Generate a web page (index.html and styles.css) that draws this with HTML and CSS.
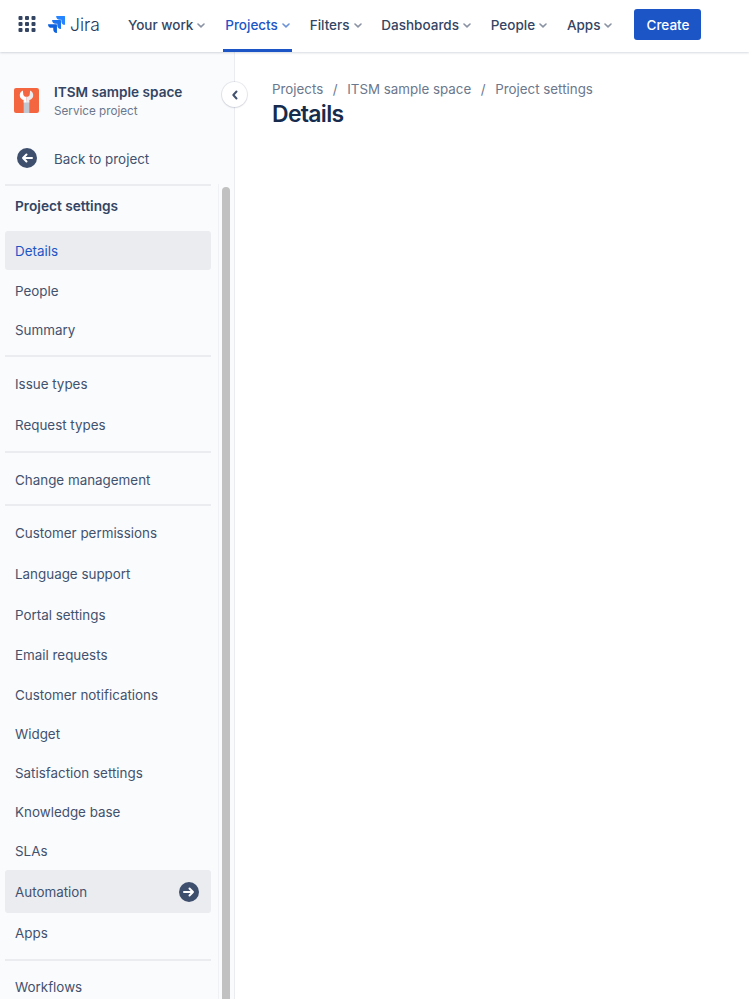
FILE: index.html
```html
<!DOCTYPE html>
<html lang="en">
<head>
<meta charset="utf-8">
<title>Details - ITSM sample space</title>
<link rel="stylesheet" href="styles.css">
</head>
<body>
<header class="topbar">
  <svg class="apps" width="18" height="18" viewBox="0 0 18 18" fill="#344563" aria-hidden="true">
    <rect x="0.5" y="1" width="4" height="4" rx="1"/><rect x="7" y="1" width="4" height="4" rx="1"/><rect x="13.5" y="1" width="4" height="4" rx="1"/>
    <rect x="0.5" y="7" width="4" height="4" rx="1"/><rect x="7" y="7" width="4" height="4" rx="1"/><rect x="13.5" y="7" width="4" height="4" rx="1"/>
    <rect x="0.5" y="13" width="4" height="4" rx="1"/><rect x="7" y="13" width="4" height="4" rx="1"/><rect x="13.5" y="13" width="4" height="4" rx="1"/>
  </svg>
  <div class="logo">
    <svg width="19" height="19" viewBox="0 0 24 24" aria-hidden="true">
      <path fill="#0f62de" d="M11.571 11.513H0a5.218 5.218 0 0 0 5.232 5.215h2.130v2.057A5.215 5.215 0 0 0 12.575 24V12.518a1.005 1.005 0 0 0-1.005-1.005z"/>
      <path fill="#1c74ee" d="M17.294 5.757H5.736a5.215 5.215 0 0 0 5.215 5.214h2.129v2.058a5.218 5.218 0 0 0 5.215 5.214V6.758a1.001 1.001 0 0 0-1.001-1.001z"/>
      <path fill="#2684ff" d="M23.013 0H11.455a5.215 5.215 0 0 0 5.215 5.215h2.129v2.057A5.215 5.215 0 0 0 24 12.483V1.005A1.001 1.001 0 0 0 23.013 0z"/>
    </svg>
    <span class="logo-text">Jira</span>
  </div>
  <nav class="nav">
    <a class="nav-item">Your work<svg class="chev" width="8" height="5" viewBox="0 0 8 5"><path d="M1 1l3 2.800L7 1" fill="none" stroke="currentColor" stroke-width="1.600" stroke-linecap="round" stroke-linejoin="round"/></svg></a>
    <a class="nav-item active">Projects<svg class="chev" width="8" height="5" viewBox="0 0 8 5"><path d="M1 1l3 2.800L7 1" fill="none" stroke="currentColor" stroke-width="1.600" stroke-linecap="round" stroke-linejoin="round"/></svg></a>
    <a class="nav-item">Filters<svg class="chev" width="8" height="5" viewBox="0 0 8 5"><path d="M1 1l3 2.800L7 1" fill="none" stroke="currentColor" stroke-width="1.600" stroke-linecap="round" stroke-linejoin="round"/></svg></a>
    <a class="nav-item">Dashboards<svg class="chev" width="8" height="5" viewBox="0 0 8 5"><path d="M1 1l3 2.800L7 1" fill="none" stroke="currentColor" stroke-width="1.600" stroke-linecap="round" stroke-linejoin="round"/></svg></a>
    <a class="nav-item">People<svg class="chev" width="8" height="5" viewBox="0 0 8 5"><path d="M1 1l3 2.800L7 1" fill="none" stroke="currentColor" stroke-width="1.600" stroke-linecap="round" stroke-linejoin="round"/></svg></a>
    <a class="nav-item">Apps<svg class="chev" width="8" height="5" viewBox="0 0 8 5"><path d="M1 1l3 2.800L7 1" fill="none" stroke="currentColor" stroke-width="1.600" stroke-linecap="round" stroke-linejoin="round"/></svg></a>
  </nav>
  <button class="create">Create</button>
</header>
<div class="layout">
  <aside class="sidebar">
    <div class="project">
      <svg class="project-icon" width="25" height="25" viewBox="0 0 24 24" aria-hidden="true">
        <rect width="24" height="24" rx="2" fill="#f4663f"/>
        <rect x="9.300" y="12" width="5.400" height="12" fill="#c1c7d0"/>
        <path fill="#fff" d="M8.500 2.500C6.300 3.500 5.200 5.700 5.600 7.800c.3 1.800 1.500 3 3.700 3.700V14H12V8.500c-1.300 0-2.400-.6-3-1.800z"/>
        <path fill="#ebecf0" d="M15.500 2.500c2.200 1 3.300 3.200 2.900 5.300-.3 1.800-1.500 3-3.700 3.700V14H12V8.500c1.300 0 2.400-.6 3-1.800z"/>
      </svg>
      <div class="project-text">
        <div class="project-name">ITSM sample space</div>
        <div class="project-type">Service project</div>
      </div>
    </div>
    <div class="back">
      <svg class="round-icon" width="20" height="20" viewBox="0 0 20 20" aria-hidden="true">
        <circle cx="10" cy="10" r="10" fill="#3e4f6e"/>
        <path d="M15 10H6M9.500 6.500L6 10l3.500 3.500" fill="none" stroke="#fff" stroke-width="2" stroke-linecap="round" stroke-linejoin="round"/>
      </svg>
      <span>Back to project</span>
    </div>
    <div class="scroller">
      <div class="list">
        <div class="heading">Project settings</div>
        <a class="row selected">Details</a>
        <a class="row">People</a>
        <a class="row">Summary</a>
        <hr class="divider wide">
        <a class="row tall">Issue types</a>
        <a class="row tall">Request types</a>
        <hr class="divider">
        <a class="row change">Change management</a>
        <hr class="divider wide">
        <a class="row tall">Customer permissions</a>
        <a class="row tall">Language support</a>
        <a class="row tall">Portal settings</a>
        <a class="row">Email requests</a>
        <a class="row">Customer notifications</a>
        <a class="row">Widget</a>
        <a class="row">Satisfaction settings</a>
        <a class="row">Knowledge base</a>
        <a class="row">SLAs</a>
        <a class="row automation">Automation
          <svg width="20" height="20" viewBox="0 0 20 20" aria-hidden="true">
            <circle cx="10" cy="10" r="10" fill="#3e4f6e"/>
            <path d="M5 10h9M10.500 6.500L14 10l-3.500 3.500" fill="none" stroke="#fff" stroke-width="2" stroke-linecap="round" stroke-linejoin="round"/>
          </svg>
        </a>
        <a class="row tall">Apps</a>
        <hr class="divider">
        <a class="row tall">Workflows</a>
      </div>
      <div class="track"><div class="thumb"></div></div>
    </div>
  </aside>
  <button class="collapse" aria-label="Collapse sidebar">
    <svg width="8" height="10" viewBox="0 0 8 10"><path d="M5.500 1.500L2.300 5l3.200 3.500" fill="none" stroke="#42526e" stroke-width="2" stroke-linecap="round" stroke-linejoin="round"/></svg>
  </button>
  <main class="content">
    <div class="crumbs">
      <span>Projects</span><span class="sep">/</span><span>ITSM sample space</span><span class="sep">/</span><span>Project settings</span>
    </div>
    <h1 class="title">Details</h1>
  </main>
</div>
</body>
</html>
```
FILE: styles.css
```css
* { box-sizing: border-box; }
html, body { margin: 0; height: 100%; overflow: hidden; }
body {
  background: #fff;
  color: #344563;
  font-family: Inter, "Liberation Sans", sans-serif;
  font-size: 13.400px;
  -webkit-font-smoothing: antialiased;
}
.topbar {
  height: 52px;
  display: flex;
  align-items: center;
  padding-left: 18px;
  background: #fff;
  box-shadow: 0 1px 2px rgba(9, 30, 66, 0.16);
  position: relative;
  z-index: 2;
}
.apps { flex: none; margin-bottom: 4px; }
.logo { display: flex; align-items: center; margin: 0 0 3px 12px; gap: 5px; width: 52px; flex: none; }
.logo-text { font-size: 17.500px; font-weight: 300; color: #253858; }
.nav { display: flex; height: 52px; margin-left: 28px; gap: 19.800px; }
.nav-item {
  display: flex;
  align-items: center;
  height: 52px;
  gap: 4px;
  padding-bottom: 3px;
  font-weight: 500;
  font-size: 13.500px;
  color: #344563;
  white-space: nowrap;
  position: relative;
}
.nav-item .chev { color: #8993a4; margin-top: 1px; }
.nav-item.active { color: #1c56c6; }
.nav-item.active .chev { color: #6b93d6; }
.nav-item.active::after {
  content: "";
  position: absolute;
  left: -2px;
  right: -2px;
  bottom: 0;
  height: 3px;
  background: #1c56c6;
}
.create {
  margin-left: 22px;
  width: 67px;
  height: 31px;
  border: 0;
  border-radius: 3px;
  background: #1c56c6;
  color: #fff;
  font: 500 13.500px Inter, "Liberation Sans", sans-serif;
  margin-top: -3px;
}
.layout { display: flex; height: 947px; position: relative; }
.sidebar {
  width: 235px;
  flex: none;
  display: flex;
  flex-direction: column;
  background: #fafbfc;
  border-right: 1px solid #ebecf0;
  overflow: hidden;
}
.project { height: 59px; margin-top: 23px; padding: 7px 0 0 14px; display: flex; gap: 15px; flex: none; }
.project-icon { margin-top: 6px; flex: none; }
.project-name { font-weight: 600; font-size: 13.600px; line-height: 20px; color: #344563; }
.project-type { font-size: 11.700px; line-height: 16px; color: #6b778c; margin-top: 1px; }
.back {
  height: 50px;
  display: flex;
  align-items: center;
  gap: 17px;
  padding-left: 17px;
  font-size: 13.400px;
  color: #42526e;
  flex: none;
}
.round-icon { margin-top: -2px; }
.scroller { display: flex; flex: 1; min-height: 0; position: relative; }
.list { width: 205.500px; margin-left: 5px; flex: none; border-top: 2px solid #ebecf0; margin-right: 7.500px; }
.heading { height: 45px; padding: 10px 0 0 10px; font-weight: 600; font-size: 13.700px; line-height: 21px; color: #344563; }
.row {
  display: flex;
  align-items: center;
  justify-content: space-between;
  height: 39.200px;
  padding: 0 12px 0 10px;
  color: #42526e;
  font-size: 13.400px;
  border-radius: 3px;
}
.row.tall { height: 41px; }
.row.change { height: 38px; margin-top: 8px; }
.row.selected { background: #ebecf0; color: #1c56c6; height: 39px; margin-bottom: 1.400px; }
.row.automation { background: #ebecf0; height: 43px; margin-top: -1px; padding-top: 2px; }
.divider { border: 0; height: 2px; background: #ebecf0; margin: 5px 0 6px; }
.divider.wide { margin-bottom: 7px; }
.track { width: 17px; border-left: 1px solid #f0f1f4; padding-left: 3px; flex: none; }
.thumb { width: 8px; height: 100%; margin-top: 3px; background: #c1c1c1; border-radius: 4px 4px 0 0; }
.collapse {
  position: absolute;
  left: 222px;
  top: 30px;
  width: 25px;
  height: 25px;
  border-radius: 50%;
  border: 0;
  background: #fff;
  box-shadow: 0 0 0 1px rgba(9, 30, 66, 0.08), 0 1px 2px rgba(9, 30, 66, 0.1);
  display: flex;
  align-items: center;
  justify-content: center;
  padding: 0;
}
.content { flex: 1; padding: 27px 0 0 37px; }
.crumbs { display: flex; font-size: 13.350px; line-height: 20px; color: #6b778c; }
.sep { width: 24px; text-align: center; }
.title { margin: 1px 0 0; font-size: 23px; line-height: 28px; font-weight: 600; color: #172b4d; letter-spacing: -0.700px; }
```
